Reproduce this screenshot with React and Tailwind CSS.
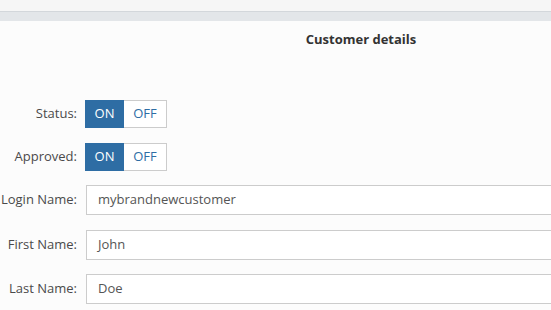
import React from "react";

const Toggle = ({ on = true }) => (
  <div className="flex h-[28px] text-[13px]">
    <button
      className={`w-[39px] h-full border ${
        on ? "bg-[#2e6da4] border-[#2e6da4] text-white" : "bg-white border-[#ccc] text-[#2e6da4]"
      }`}
    >
      ON
    </button>
    <button
      className={`w-[43px] h-full border border-l-0 ${
        on ? "bg-white border-[#ccc] text-[#2e6da4]" : "bg-[#2e6da4] border-[#2e6da4] text-white"
      }`}
    >
      OFF
    </button>
  </div>
);

const Row = ({ label, className = "", children }) => (
  <div className={`flex items-center ${className}`}>
    <div className="w-[78px] shrink-0 text-right text-[13px] text-[#4a4a4a] whitespace-nowrap pr-[1px]">
      {label}
    </div>
    <div className="ml-[7px]">{children}</div>
  </div>
);

// input sits one pixel right of the toggles in the source
const TextField = ({ value }) => (
  <div className="ml-px w-[620px] h-[30px] bg-white border border-[#ccc] flex items-center px-[11px] text-[13px] text-[#555]">
    {value}
  </div>
);

export default function App() {
  return (
    <div className="w-[551px] h-[310px] overflow-hidden bg-[#fcfcfc] font-['Open_Sans',sans-serif]">
      <div className="h-[11px] bg-[#f6f6f6]" />
      <div className="h-[10px] bg-[#e3e6e9] border-t border-[#d3d7db]" />

      <div className="w-[722px] mt-[10px] text-center text-[13px] leading-[16px] font-bold text-[#333]">
        Customer details
      </div>

      <Row label="Status:" className="mt-[53px]">
        <Toggle on />
      </Row>
      <Row label="Approved:" className="mt-[15px]">
        <Toggle on />
      </Row>
      <Row label="Login Name:" className="mt-[14px]">
        <TextField value="mybrandnewcustomer" />
      </Row>
      <Row label="First Name:" className="mt-[15px]">
        <TextField value="John" />
      </Row>
      <Row label="Last Name:" className="mt-[14px]">
        <TextField value="Doe" />
      </Row>
    </div>
  );
}
